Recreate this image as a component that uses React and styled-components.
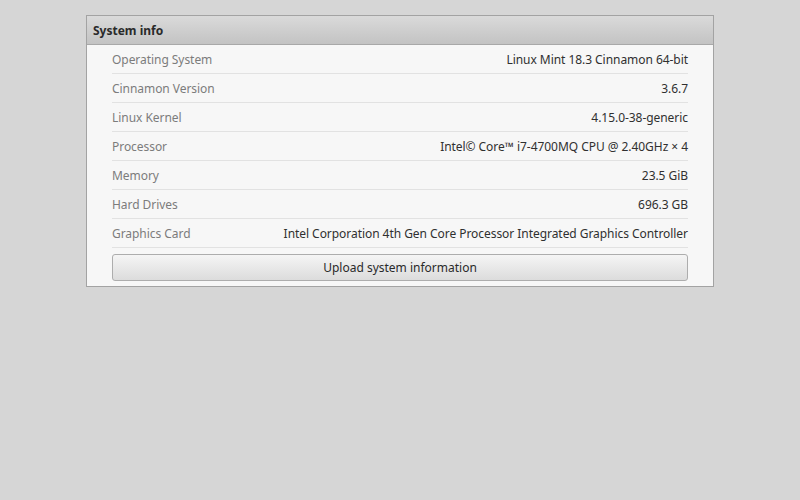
import React from 'react'
import styled, { createGlobalStyle } from 'styled-components'

const GlobalStyle = createGlobalStyle`
  html, body {
    margin: 0;
    padding: 0;
    background: #d6d6d6;
  }
  body {
    font-family: "Noto Sans", "Open Sans", sans-serif;
    font-size: 12px;
    color: #303030;
  }
`

const Page = styled.div`
  width: 800px;
  height: 500px;
  padding-top: 15px;
  box-sizing: border-box;
`

const Panel = styled.div`
  width: 628px;
  margin-left: 86px;
  border: 1px solid #a3a3a3;
  background: #f7f7f7;
  box-sizing: border-box;
`

const Header = styled.div`
  height: 28px;
  display: flex;
  align-items: center;
  padding-left: 6px;
  padding-top: 1px;
  box-sizing: border-box;
  height: 29px;
  background: linear-gradient(#dadada, #c3c3c3);
  border-bottom: 1px solid #a8a8a8;
  font-weight: bold;
  color: #2a2a2a;
`

const Body = styled.div`
  padding: 0 25px 5px 25px;
`

const Row = styled.div`
  height: 28px;
  display: flex;
  align-items: center;
  justify-content: space-between;
  border-bottom: 1px solid #e2e2e2;
  letter-spacing: -0.05px;
`

const Label = styled.span`
  color: #7c7c7c;
`

const Value = styled.span`
  color: #303030;
`

const Button = styled.button`
  display: block;
  width: 100%;
  height: 27px;
  margin-top: 6px;
  border: 1px solid #adadad;
  border-radius: 3px;
  background: linear-gradient(#f5f5f5, #dcdcdc);
  font-family: inherit;
  font-size: 12px;
  color: #2a2a2a;
  padding: 0;
`

const rows = [
  ['Operating System', 'Linux Mint 18.3 Cinnamon 64-bit'],
  ['Cinnamon Version', '3.6.7'],
  ['Linux Kernel', '4.15.0-38-generic'],
  ['Processor', 'Intel© Core™ i7-4700MQ CPU @ 2.40GHz × 4'],
  ['Memory', '23.5 GiB'],
  ['Hard Drives', '696.3 GB'],
  ['Graphics Card', 'Intel Corporation 4th Gen Core Processor Integrated Graphics Controller'],
]

const App = () => (
  <Page>
    <GlobalStyle />
    <Panel>
      <Header>System info</Header>
      <Body>
        {rows.map(([label, value]) => (
          <Row key={label}>
            <Label>{label}</Label>
            <Value>{value}</Value>
          </Row>
        ))}
        <Button>Upload system information</Button>
      </Body>
    </Panel>
  </Page>
)

export default App
